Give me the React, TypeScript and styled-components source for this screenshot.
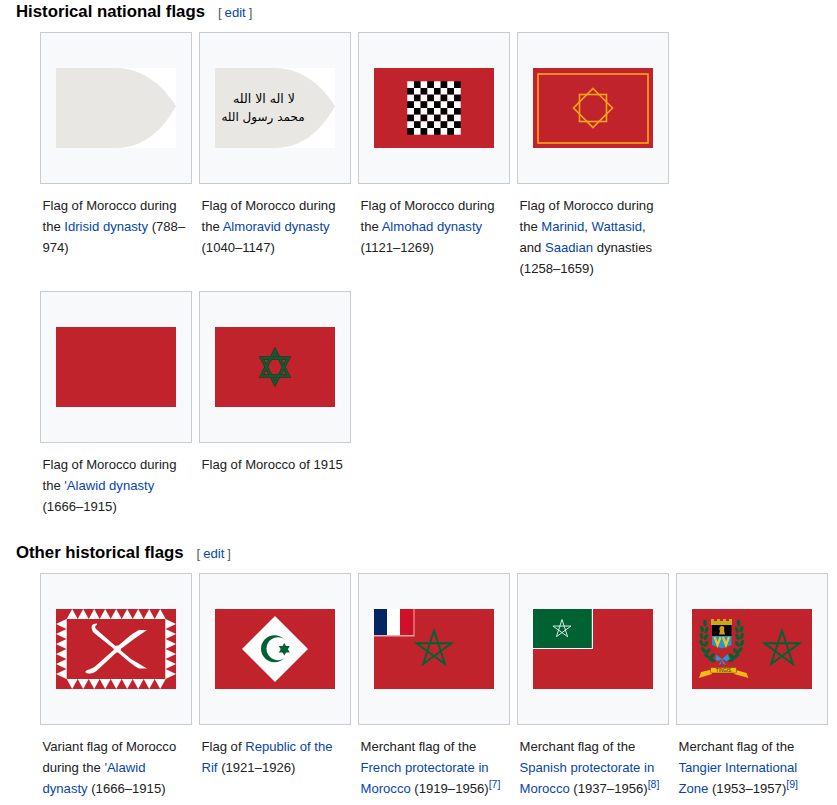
import React from "react";
import styled, { createGlobalStyle } from "styled-components";

const RED = "#c1232c";
const GREEN = "#006233";

const Global = createGlobalStyle`
  html, body { margin: 0; padding: 0; background: #fff; }
  body { font-family: "Liberation Sans", Arial, sans-serif; color: #202122; overflow: hidden; height: 805px; }
`;

const Page = styled.main`
  width: 837px;
  padding-left: 16px;
  box-sizing: border-box;
`;
const Section = styled.section<{ $top: number }>`
  margin-top: ${(p) => p.$top}px;
`;
const Heading = styled.h3`
  margin: 0;
  height: 32px;
  display: flex;
  align-items: baseline;
  gap: 13px;
  font-size: 16.75px;
  line-height: 24px;
  font-weight: 700;
  color: #000;
`;
const Edit = styled.span`
  font-size: 13.1px;
  font-weight: 400;
  color: #54595d;
  a { margin: 0 3px; }
`;
const Link = styled.a`
  color: #0645ad;
  text-decoration: none;
`;
const Gallery = styled.div<{ $columns: number }>`
  display: grid;
  grid-template-columns: repeat(${(p) => p.$columns}, 152px);
  column-gap: 7px;
  row-gap: 11.6px;
  margin-left: 24px;
`;
const Item = styled.figure`
  margin: 0;
  width: 152px;
`;
const Thumb = styled.div`
  box-sizing: border-box;
  width: 152px;
  height: 152px;
  background: #f8f9fa;
  border: 1px solid #c8ccd1;
  display: flex;
  align-items: center;
  justify-content: center;
`;
const FlagSvg = styled.svg`
  display: block;
  width: 120px;
  height: 80px;
`;
const Caption = styled.figcaption`
  margin: 11px 0 0;
  padding: 0 2.5px;
  font-size: 13.1px;
  line-height: 21px;
  color: #202122;
`;
const Ref = styled.sup`
  font-size: 10.5px;
  line-height: 1;
  vertical-align: super;
`;

const Flag: React.FC<{ children?: React.ReactNode; bg?: string }> = ({ children, bg = RED }) => (
  <FlagSvg viewBox="0 0 120 80">
    <rect width="120" height="80" fill={bg} />
    {children}
  </FlagSvg>
);

const SHIELD = "M0 0H60C85 0 105 15 120 38C105 65 85 80 60 80H0Z";

const star5 = (cx: number, cy: number, r: number) => {
  const pts: string[] = [];
  for (let i = 0; i < 5; i++) {
    const a = -Math.PI / 2 + (i * 2 * 2 * Math.PI) / 5;
    pts.push(`${(cx + r * Math.cos(a)).toFixed(2)},${(cy + r * Math.sin(a)).toFixed(2)}`);
  }
  return pts.join(" ");
};

const Checker = () => {
  const cells: React.ReactNode[] = [];
  const s = 53.4 / 8;
  for (let r = 0; r < 8; r++)
    for (let c = 0; c < 8; c++)
      cells.push(
        <rect key={`${r}-${c}`} x={33.3 + c * s} y={13.3 + r * s} width={s} height={s} fill={(r + c) % 2 ? "#000" : "#fff"} />
      );
  return <>{cells}</>;
};

const Alawid = () => {
  const shapes: React.ReactNode[] = [];
  for (let i = 0; i < 9; i++) {
    const x = 10.7 + i * 11;
    shapes.push(<polygon key={`t${i}`} points={`${x},10 ${x + 5.5},0 ${x + 11},10`} fill="#fff" />);
    shapes.push(<polygon key={`b${i}`} points={`${x},70 ${x + 5.5},80 ${x + 11},70`} fill="#fff" />);
  }
  for (let i = 0; i < 6; i++) {
    const y = 10 + i * 10;
    shapes.push(<polygon key={`l${i}`} points={`10.5,${y} 0,${y + 5} 10.5,${y + 10}`} fill="#fff" />);
    shapes.push(<polygon key={`r${i}`} points={`109.5,${y} 120,${y + 5} 109.5,${y + 10}`} fill="#fff" />);
  }
  return (
    <>
      {shapes}
      <rect x="10.2" y="10" width="0.8" height="60" fill="#f0c8ca" />
      <rect x="109" y="10" width="0.8" height="60" fill="#f0c8ca" />
      <path fill="#fff" d="M35.7 17.5C35.7 15.5 38 14.5 41 14.5L41 15.8C38.8 16.5 38.8 18.5 40 20L60 37.5L75 50L91 59.5L83 59.5C77 56.5 70 50.500 60 41.500L38 24C36 22 35.5 19.500 35.7 17.5Z" />
      <path fill="#fff" d="M91 21L83 21C76 24.500 70 30 61 38L39 57.500C35 60.500 31 60.500 29.500 62.500C29 64.500 33 64.800 36 64.300C39 63.300 41 62 42.500 60L62 42L78 30Z" />
      <circle cx="61.3" cy="40" r="3.6" fill="#fff" />
    </>
  );
};

const Hexagram = () => (
  <>
    <g fill="none" stroke="#3a2a1c" strokeWidth="3.4">
      <polygon points="60,23.5 73.5,49 46.5,49" />
      <polygon points="60,56.5 73.5,31 46.5,31" />
    </g>
    <g fill="none" stroke={GREEN} strokeWidth="2.2">
      <polygon points="60,23.5 73.5,49 46.5,49" />
      <polygon points="60,56.5 73.5,31 46.5,31" />
    </g>
  </>
);

const LAUREL: [number, number, number][] = [
  [13, 14, 0], [10, 20, -15], [14.5, 21, 20], [9.5, 27, -10], [14, 28, 30], [9.5, 34, -25],
  [14, 35, 35], [11.5, 41, -35], [16, 42, 40], [15, 47, -50], [20, 47, 45], [20, 51, -65],
];

const Laurel = () => (
  <g fill={GREEN}>
    {LAUREL.map(([x, y, r], i) => (
      <ellipse key={`l${i}`} cx={x} cy={y} rx="1.7" ry="3.4" transform={`rotate(${r} ${x} ${y})`} />
    ))}
    {LAUREL.map(([x, y, r], i) => (
      <ellipse key={`r${i}`} cx={59.5 - x} cy={y} rx="1.7" ry="3.4" transform={`rotate(${-r} ${59.5 - x} ${y})`} />
    ))}
  </g>
);

const Tangier = () => (
  <>
    <polygon points={star5(90, 40, 18.5)} fill="none" stroke={GREEN} strokeWidth="1.9" />
    <Laurel />
    <path d="M19 10H22V12H25V10H28V12H31V10H34V12H37V10H40V16H19Z" fill="#c9a91c" />
    <path d="M20 16H39.5V27H20Z" fill="#000" />
    <path d="M20 27H39.5V36L30 39.5L20 36Z" fill="#1c9ad6" />
    <path d="M22.5 28L25.5 36L28.5 28M31 28L34 36L37 28" fill="none" stroke="#f7c11c" strokeWidth="2.2" />
    <path d="M27 25.5L28 22C26.5 19 28 17 30 17C32 17 33 19 32 21L33 25.5Z" fill="#d39a16" />
    <path d="M30 50L24 45.5L23.5 50.5L26 52L30 50L36 45L37.5 50.5L34.5 52ZM30 50L26.5 56L29 55L30 50L31 55L34 56Z" fill="#1d9be2" />
    <path d="M7 69L9 63L20 60.5V65ZM56.5 69L54.5 64L42 60.5V65Z" fill="#f7b812" />
    <rect x="18.5" y="58.5" width="26" height="5.5" rx="1" fill="#f7b812" stroke="#5a4200" strokeWidth="0.5" />
    <text x="31.5" y="63" textAnchor="middle" fontSize="4.6" fontFamily="'Liberation Sans', sans-serif" fill="#222">TINGIS</text>
  </>
);

const flags = {
  idrisid: (
    <Flag bg="#fff"><path d={SHIELD} fill="#e9e7e4" /></Flag>
  ),
  almoravid: (
    <Flag bg="#fff">
      <path d={SHIELD} fill="#e9e7e4" />
      <g fontFamily="'DejaVu Sans', sans-serif" fill="#000" textAnchor="middle" direction="rtl">
        <text x="49" y="35" fontSize="12.5">لا اله الا الله</text>
        <text x="48" y="53" fontSize="12">محمد رسول الله</text>
      </g>
    </Flag>
  ),
  almohad: (
    <Flag><Checker /></Flag>
  ),
  marinid: (
    <Flag>
      <g fill="none" stroke="#f9a51a" strokeWidth="1.6">
        <rect x="5" y="6" width="110" height="69" />
        <rect x="46.5" y="26.5" width="27" height="27" />
        <polygon points="60,20.5 79.5,40 60,59.5 40.5,40" />
      </g>
    </Flag>
  ),
  alawid: <Flag />,
  f1915: <Flag><Hexagram /></Flag>,
  variant: <Flag><Alawid /></Flag>,
  rif: (
    <Flag>
      <polygon points="60,7 93,40 60,73 27,40" fill="#fff" />
      <circle cx="59.5" cy="39.7" r="13.5" fill={GREEN} />
      <circle cx="63" cy="39.7" r="11.5" fill="#fff" />
      <g fill={GREEN}>
        <polygon points="69.3,34 74.8,43.5 63.8,43.5" />
        <polygon points="69.3,46.5 74.8,37 63.8,37" />
      </g>
    </Flag>
  ),
  french: (
    <Flag>
      <polygon points={star5(60, 40, 18.5)} fill="none" stroke={GREEN} strokeWidth="1.9" />
      <rect width="40.5" height="27.5" fill="#f4a9ad" />
      <rect width="13" height="26" fill="#002664" />
      <rect x="13" width="13" height="26" fill="#fff" />
      <rect x="26" width="13.5" height="26" fill="#ce1126" />
    </Flag>
  ),
  spanish: (
    <Flag>
      <rect width="60" height="40" fill="#fff" />
      <rect width="58.8" height="39" fill={GREEN} />
      <polygon points={star5(29, 20, 9.5)} fill="none" stroke="#dfe9e3" strokeWidth="1" />
    </Flag>
  ),
  tangier: <Flag><Tangier /></Flag>,
};

export default function App() {
  return (
    <Page>
      <Global />
      <Section $top={0}>
        <Heading>
          Historical national flags
          <Edit>[<Link href="#">edit</Link>]</Edit>
        </Heading>
        <Gallery $columns={4}>
          <Item>
            <Thumb>{flags.idrisid}</Thumb>
            <Caption>Flag of Morocco during the <Link href="#">Idrisid dynasty</Link> (788–974)</Caption>
          </Item>
          <Item>
            <Thumb>{flags.almoravid}</Thumb>
            <Caption>Flag of Morocco during the <Link href="#">Almoravid dynasty</Link> (1040–1147)</Caption>
          </Item>
          <Item>
            <Thumb>{flags.almohad}</Thumb>
            <Caption>Flag of Morocco during the <Link href="#">Almohad dynasty</Link> (1121–1269)</Caption>
          </Item>
          <Item>
            <Thumb>{flags.marinid}</Thumb>
            <Caption>Flag of Morocco during the <Link href="#">Marinid</Link>, <Link href="#">Wattasid</Link>, and <Link href="#">Saadian</Link> dynasties (1258–1659)</Caption>
          </Item>
          <Item>
            <Thumb>{flags.alawid}</Thumb>
            <Caption>Flag of Morocco during the <Link href="#">'Alawid dynasty</Link> (1666–1915)</Caption>
          </Item>
          <Item>
            <Thumb>{flags.f1915}</Thumb>
            <Caption>Flag of Morocco of 1915</Caption>
          </Item>
        </Gallery>
      </Section>
      <Section $top={24.4}>
        <Heading>
          Other historical flags
          <Edit>[<Link href="#">edit</Link>]</Edit>
        </Heading>
        <Gallery $columns={5}>
          <Item>
            <Thumb>{flags.variant}</Thumb>
            <Caption>Variant flag of Morocco during the <Link href="#">'Alawid dynasty</Link> (1666–1915)</Caption>
          </Item>
          <Item>
            <Thumb>{flags.rif}</Thumb>
            <Caption>Flag of <Link href="#">Republic of the Rif</Link> (1921–1926)</Caption>
          </Item>
          <Item>
            <Thumb>{flags.french}</Thumb>
            <Caption>Merchant flag of the <Link href="#">French protectorate in Morocco</Link> (1919–1956)<Ref><Link href="#">[7]</Link></Ref></Caption>
          </Item>
          <Item>
            <Thumb>{flags.spanish}</Thumb>
            <Caption>Merchant flag of the <Link href="#">Spanish protectorate in Morocco</Link> (1937–1956)<Ref><Link href="#">[8]</Link></Ref></Caption>
          </Item>
          <Item>
            <Thumb>{flags.tangier}</Thumb>
            <Caption>Merchant flag of the <Link href="#">Tangier International Zone</Link> (1953–1957)<Ref><Link href="#">[9]</Link></Ref></Caption>
          </Item>
        </Gallery>
      </Section>
    </Page>
  );
}
